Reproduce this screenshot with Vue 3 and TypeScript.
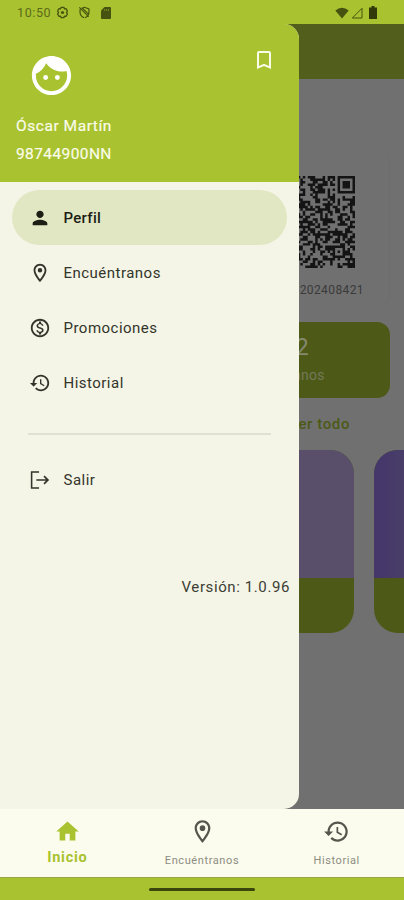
<script setup lang="ts">
interface Icon {
  d: string
}

const icons: Record<string, Icon> = {
  person: { d: 'M12 12c2.21 0 4-1.79 4-4s-1.79-4-4-4-4 1.79-4 4 1.79 4 4 4zm0 2c-2.67 0-8 1.34-8 4v2h16v-2c0-2.66-5.33-4-8-4z' },
  place: { d: 'M12 2C8.13 2 5 5.13 5 9c0 5.25 7 13 7 13s7-7.75 7-13c0-3.87-3.13-7-7-7zM7 9c0-2.76 2.24-5 5-5s5 2.24 5 5c0 2.88-2.88 7.19-5 9.88C9.92 16.21 7 11.85 7 9zM12 6.5a2.5 2.5 0 1 0 0 5 2.5 2.5 0 0 0 0-5z' },
  money: { d: 'M12 2C6.48 2 2 6.48 2 12s4.48 10 10 10 10-4.48 10-10S17.52 2 12 2zm0 18c-4.41 0-8-3.59-8-8s3.59-8 8-8 8 3.59 8 8-3.59 8-8 8zm.31-8.86c-1.77-.45-2.34-.94-2.34-1.67 0-.84.79-1.43 2.1-1.43 1.38 0 1.9.66 1.94 1.64h1.71c-.05-1.34-.87-2.57-2.49-2.97V5H10.9v1.69c-1.51.32-2.72 1.3-2.72 2.81 0 1.79 1.49 2.69 3.66 3.21 1.95.46 2.34 1.15 2.34 1.87 0 .53-.39 1.39-2.1 1.39-1.6 0-2.23-.72-2.32-1.64H8.04c.1 1.7 1.36 2.66 2.86 2.97V19h2.34v-1.67c1.52-.29 2.72-1.16 2.73-2.77-.01-2.2-1.9-2.96-3.66-3.42z' },
  history: { d: 'M13 3c-4.97 0-9 4.03-9 9H1l3.89 3.89.07.14L9 12H6c0-3.87 3.13-7 7-7s7 3.13 7 7-3.13 7-7 7c-1.93 0-3.68-.79-4.94-2.06l-1.42 1.42C8.27 19.99 10.51 21 13 21c4.97 0 9-4.03 9-9s-4.03-9-9-9zm-1 5v5l4.28 2.54.72-1.21-3.5-2.08V8H12z' },
  logout: { d: 'M2 2.500h9v1.700H3.700v15.600H11v1.700H2zM17 7.200l5 4.800-5 4.800-1.200-1.200 2.700-2.700H8v-1.800h10.500l-2.700-2.700z' },
  home: { d: 'M10 20v-6h4v6h5v-8h3L12 3 2 12h3v8z' },
  face: { d: 'M9 11.75a1.25 1.25 0 1 0 0 2.5 1.25 1.25 0 0 0 0-2.5zm6 0a1.25 1.25 0 1 0 0 2.5 1.25 1.25 0 0 0 0-2.5zM12 2C6.48 2 2 6.48 2 12s4.48 10 10 10 10-4.48 10-10S17.52 2 12 2zm0 18c-4.41 0-8-3.59-8-8 0-.29.02-.58.05-.86 2.36-1.05 4.23-2.98 5.21-5.37C11.07 8.33 14.05 10 17.42 10c.78 0 1.53-.09 2.25-.26.21.71.33 1.47.33 2.26 0 4.41-3.59 8-8 8z' },
  bookmark: { d: 'M17 3H7c-1.1 0-2 .9-2 2v16l7-3 7 3V5c0-1.1-.9-2-2-2zm0 15-5-2.18L7 18V5h10v13z' },
}

const menu = [
  { icon: 'person', label: 'Perfil', active: true },
  { icon: 'place', label: 'Encuéntranos', active: false },
  { icon: 'money', label: 'Promociones', active: false },
  { icon: 'history', label: 'Historial', active: false },
]

const tabs = [
  { icon: 'home', label: 'Inicio', active: true },
  { icon: 'place', label: 'Encuéntranos', active: false },
  { icon: 'history', label: 'Historial', active: false },
]

const SIZE = 37

function ring(x: number, y: number, cx: number, cy: number, r: number): number {
  const d = Math.max(Math.abs(x - cx), Math.abs(y - cy))
  return d <= r ? d : -1
}

function buildQr(): string {
  let seed = 98744
  let path = ''
  for (let y = 0; y < SIZE; y++) {
    for (let x = 0; x < SIZE; x++) {
      seed = (seed * 48271) % 2147483647
      let dark = seed / 2147483647 < 0.52
      for (const [cx, cy] of [[3, 3], [SIZE - 4, 3], [3, SIZE - 4]]) {
        const d = ring(x, y, cx, cy, 4)
        if (d >= 0) dark = d !== 2 && d !== 4
      }
      const a = ring(x, y, 30, 30, 2)
      if (a >= 0) dark = a !== 1
      if (dark) path += `M${x} ${y}h1v1h-1z`
    }
  }
  return path
}

const qrPath = buildQr()
</script>

<template>
  <div class="phone">
    <header class="status">
      <span class="clock">10:50</span>
      <svg class="s-gear" viewBox="0 0 14 14" fill="none" stroke="currentColor">
        <path stroke-width="1.4" d="M5.500 1.500h3l.6 1.500 1.700-.2 1.500 2.500-1 1.700 1 1.700-1.500 2.500-1.700-.2-.6 1.500h-3l-.6-1.500-1.700.2-1.500-2.500 1-1.700-1-1.700 1.500-2.500 1.700.2z" />
        <circle cx="7" cy="7" r="1.7" fill="currentColor" stroke="none" />
      </svg>
      <svg class="s-shield" viewBox="0 0 14 14" fill="none" stroke="currentColor" stroke-width="1.3">
        <path d="M4 2.600 7 1.400l4.800 1.800v3.500c0 2.700-1.700 4.900-4.500 6M2.200 3.400v3.300c0 2.400 1.600 4.700 4.300 5.900M1.500 1.500l10 10M5 2.500l6 6" />
      </svg>
      <svg class="s-card" viewBox="0 0 12 14"><path fill="currentColor" d="M4.500 1H10q1 0 1 1v10q0 1-1 1H2q-1 0-1-1V4.500z" /><path stroke="#a9c22f" stroke-width=".5" d="M4.700 3v2M6.600 3v2M8.500 3v2" /></svg>
      <span class="spacer"></span>
      <svg class="s-wifi" viewBox="0 0 14 12"><path fill="currentColor" d="M.3 3.500Q7-2 13.700 3.500L7 11.500z" /></svg>
      <svg class="s-signal" viewBox="0 0 12 12"><path fill="none" stroke="currentColor" d="M11 1.300V11H1.300z" /></svg>
      <svg class="s-battery" viewBox="0 0 8 13"><path fill="currentColor" d="M2.500 0h3v1.500H8V13H0V1.500h2.500z" /></svg>
    </header>

    <div class="stage">
      <main class="page">
        <div class="appbar"></div>
        <section class="qr-card">
          <svg class="qr" :viewBox="`0 0 ${SIZE} ${SIZE}`"><path :d="qrPath" /></svg>
          <p class="qr-code">98744202408421</p>
        </section>
        <section class="stats">
          <div class="stat"></div>
          <div class="stat right">
            <strong>2</strong>
            <span>Cercanos</span>
          </div>
        </section>
        <a class="see-all">Ver todo</a>
        <div class="carousel">
          <article class="promo"><div class="art"></div></article>
          <article class="promo second"><div class="art"></div></article>
        </div>
      </main>

      <aside class="drawer">
        <div class="profile">
          <div class="profile-top">
            <svg class="face" viewBox="0 0 24 24"><path :d="icons.face.d" /></svg>
            <svg class="bookmark" viewBox="0 0 24 24"><path :d="icons.bookmark.d" /></svg>
          </div>
          <p class="name">Óscar Martín</p>
          <p class="name account">98744900NN</p>
        </div>
        <nav class="menu">
          <a v-for="m in menu" :key="m.label" class="item" :class="{ active: m.active }">
            <svg class="icon" viewBox="0 0 24 24"><path :d="icons[m.icon].d" fill-rule="evenodd" /></svg>
            <span>{{ m.label }}</span>
          </a>
          <hr class="divider" />
          <a class="item">
            <svg class="icon" viewBox="0 0 24 24"><path :d="icons.logout.d" /></svg>
            <span>Salir</span>
          </a>
        </nav>
        <p class="version">Versión: 1.0.96</p>
      </aside>
    </div>

    <nav class="tabs">
      <a v-for="t in tabs" :key="t.label" class="tab" :class="{ active: t.active }">
        <svg class="tab-icon" viewBox="0 0 24 24"><path :d="icons[t.icon].d" fill-rule="evenodd" /></svg>
        <span>{{ t.label }}</span>
      </a>
    </nav>
    <footer class="gesture"><span class="handle"></span></footer>
  </div>
</template>

<style>
body {
  background: #a9c22f;
}
</style>

<style scoped>
.phone {
  width: 404px;
  height: 900px;
  display: flex;
  flex-direction: column;
  overflow: hidden;
  background: #a9c22f;
  font-family: Roboto, 'Liberation Sans', sans-serif;
}
p {
  margin: 0;
}
svg {
  display: block;
  flex: none;
}
.status {
  height: 24px;
  box-sizing: border-box;
  display: flex;
  align-items: center;
  padding: 1px 26px 0 17px;
  color: #46520f;
}
.clock {
  width: 39px;
  font-size: 12.5px;
  letter-spacing: 0.6px;
  color: #5c6b1b;
}
.s-gear {
  width: 13px;
  height: 13px;
}
.s-shield {
  width: 13px;
  height: 13px;
  margin-left: 9px;
}
.s-card {
  width: 12px;
  height: 14px;
  margin-left: 9px;
}
.spacer {
  flex: 1;
}
.s-wifi {
  width: 14px;
  height: 12px;
}
.s-signal {
  width: 12px;
  height: 12px;
  margin-left: 2px;
}
.s-battery {
  width: 8px;
  height: 13px;
  margin-left: 6px;
  margin-right: 1px;
  color: #313a08;
}
.stage {
  position: relative;
  height: 785px;
  background: #707070;
}
.page {
  height: 785px;
  overflow: hidden;
  display: flex;
  flex-direction: column;
}
.appbar {
  height: 55px;
  flex: none;
  background: #525e1c;
}
.qr-card {
  height: 151px;
  margin: 74px 14px 0 228px;
  box-sizing: border-box;
  padding: 23px 0 0 35px;
  border-radius: 8px;
  border-right: 1px solid #6d6d6d;
}
.qr {
  width: 92px;
  height: 92px;
  fill: #141414;
}
.qr-code {
  width: 101px;
  margin-top: 14px;
  font-size: 12px;
  line-height: 16px;
  letter-spacing: 0.4px;
  color: #3a3a3a;
  display: flex;
  justify-content: flex-end;
}
.stats {
  height: 76px;
  flex: none;
  margin: 18px 14px 0;
  display: flex;
  border-radius: 13px;
  background: #4d5a17;
}
.stat {
  flex: 1;
}
.right {
  display: flex;
  flex-direction: column;
  align-items: center;
  padding: 11px 0 0 7px;
  color: #73785a;
}
.right strong {
  margin-left: 9px;
  font-size: 23px;
  line-height: 30px;
  font-weight: 400;
  color: #85886f;
}
.right span {
  margin-top: 3px;
  margin-right: 7px;
  font-size: 14px;
  line-height: 18px;
  letter-spacing: 0.2px;
}
.see-all {
  margin: 16px 54px 0 0;
  align-self: flex-end;
  font-size: 15px;
  line-height: 20px;
  font-weight: 500;
  letter-spacing: 0.6px;
  color: #4d5a17;
}
.carousel {
  display: flex;
  gap: 20px;
  margin: 16px 0 0 34px;
}
.promo {
  width: 320px;
  height: 183px;
  flex: none;
  border-radius: 24px;
  overflow: hidden;
  background: #4d5a17;
}
.art {
  height: 128px;
  background: #594f6a;
}
.second .art {
  background: linear-gradient(90deg, #44366a, #493e69 30px);
}
.drawer {
  position: absolute;
  left: 0;
  top: 0;
  width: 299px;
  height: 785px;
  border-radius: 0 15px 15px 0;
  overflow: hidden;
  background: #f4f5e6;
}
.profile {
  height: 158px;
  box-sizing: border-box;
  padding: 24px 23px 0 16px;
  background: #a9c22f;
  color: #fafce9;
}
.profile-top {
  height: 64px;
  display: flex;
  justify-content: space-between;
  padding-left: 12px;
}
.face {
  width: 47px;
  height: 47px;
  margin-top: 4px;
  fill: #fff;
}
.bookmark {
  width: 24px;
  height: 24px;
  fill: #fafce9;
}
.name {
  font-size: 15.5px;
  line-height: 28px;
  letter-spacing: 0.55px;
  -webkit-text-stroke: 0.2px currentColor;
}
.account {
  letter-spacing: 0.4px;
}
.menu {
  padding: 8px 12px 0;
}
.item {
  height: 55px;
  box-sizing: border-box;
  padding-left: 17px;
  display: flex;
  align-items: center;
  gap: 12.5px;
  border-radius: 28px;
  font-size: 15px;
  letter-spacing: 0.48px;
  color: #33342b;
}
.item.active {
  background: #e2e7c3;
  color: #1c1d15;
  font-weight: 500;
  letter-spacing: 0.3px;
}
.icon {
  width: 22px;
  height: 22px;
  fill: currentColor;
}
.divider {
  height: 2px;
  margin: 23px 16px 17px;
  border: 0;
  background: #dfe0d2;
}
.version {
  margin-top: 70px;
  padding-right: 9px;
  text-align: right;
  font-size: 15px;
  line-height: 20px;
  letter-spacing: 0.6px;
  color: #3c3d35;
}
.tabs {
  height: 68px;
  flex: none;
  display: flex;
  background: #fbfced;
}
.tab {
  flex: 1;
  display: flex;
  flex-direction: column;
  align-items: center;
  padding-top: 9px;
  font-size: 11px;
  line-height: 14px;
  letter-spacing: 0.6px;
  color: #8c8d83;
}
.tab-icon {
  width: 27px;
  height: 27px;
  margin-bottom: 9px;
  fill: #55564d;
}
.tab.active {
  font-size: 14.5px;
  font-weight: 700;
  letter-spacing: 0.7px;
  color: #a9c22f;
}
.tab.active .tab-icon {
  margin-bottom: 6px;
  fill: #a9c22f;
}
.gesture {
  flex: 1;
  box-sizing: border-box;
  border-top: 1px solid #98a647;
  display: flex;
  align-items: center;
  justify-content: center;
}
.handle {
  width: 106px;
  height: 3px;
  border-radius: 2px;
  background: #3b460c;
}
</style>
